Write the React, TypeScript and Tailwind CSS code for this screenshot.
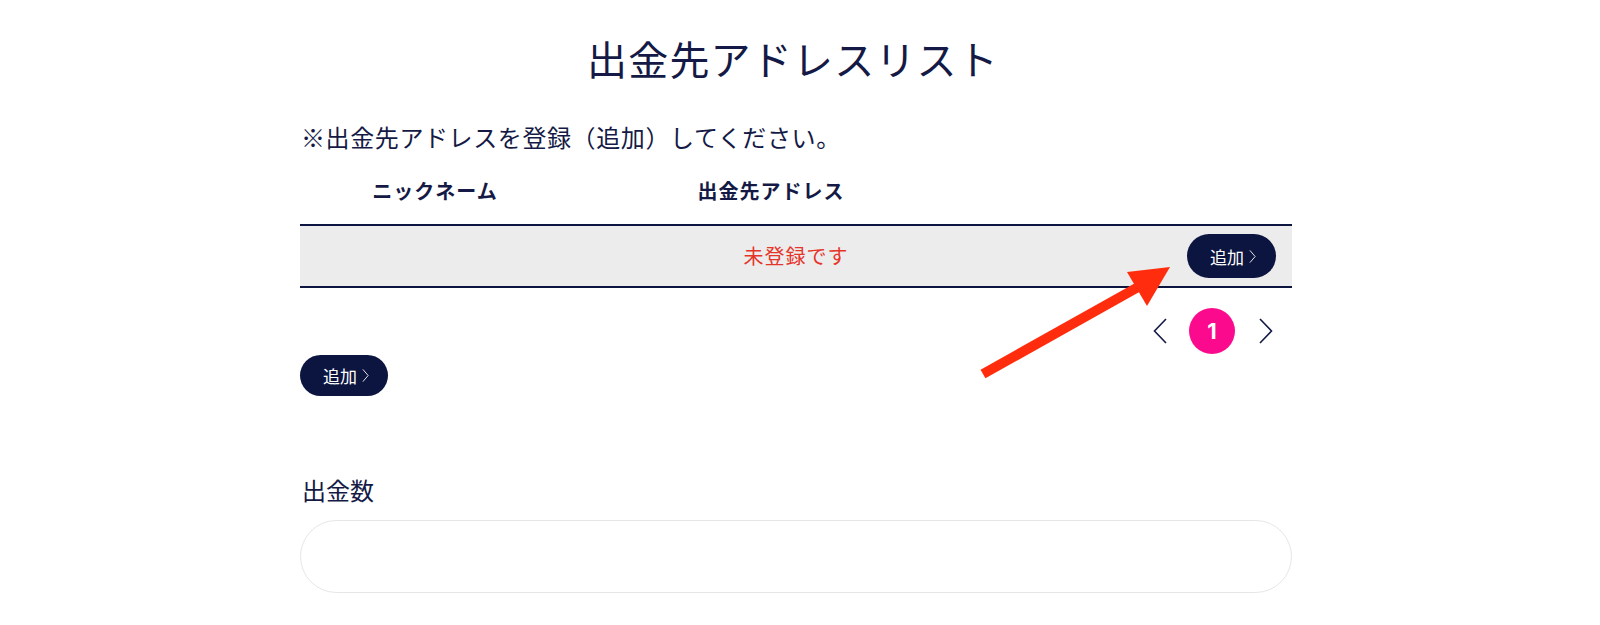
import React from 'react';

const Chevron: React.FC<{ dir: 'left' | 'right'; className?: string }> = ({ dir, className }) => (
  <svg viewBox="0 0 14 26" className={className} fill="none" stroke="currentColor" strokeWidth={1.6}>
    {dir === 'left' ? <polyline points="13,1 1.5,13 13,25" /> : <polyline points="1,1 12.5,13 1,25" />}
  </svg>
);

const AddButton: React.FC<{ className?: string }> = ({ className = '' }) => (
  <button
    className={`flex items-center rounded-full bg-[#0c1540] text-white text-[17px] leading-none pl-[23px] pr-[18px] ${className}`}
  >
    <span>追加</span>
    <svg viewBox="0 0 8 16" className="w-[7px] h-[15px] ml-[5px]" fill="none" stroke="currentColor" strokeWidth={1}>
      <polyline points="1,1 7,8 1,15" />
    </svg>
  </button>
);

export default function App() {
  return (
    <div className="relative w-full min-h-[625px] bg-white text-[#141a45] font-['Noto_Sans_CJK_JP','Noto_Sans',sans-serif]">
      <div className="w-[992px] ml-[300px] pt-[34px] pb-[32px] flex flex-col">
        <h1 className="text-center text-[40px] leading-[48px] font-normal tracking-[0.03em] mr-[6px]">出金先アドレスリスト</h1>

        <p className="mt-[39px] text-[24px] leading-[32px] tracking-[0.025em] ml-[1px]">※出金先アドレスを登録（追加）してください。</p>

        {/* table header */}
        <div className="mt-[24px] flex h-[28px] items-center text-[20px] font-bold tracking-[0.05em] leading-[28px]">
          <div className="w-[270px] text-center">ニックネーム</div>
          <div className="w-[402px] text-center">出金先アドレス</div>
          <div className="flex-1" />
        </div>

        {/* table body */}
        <div className="mt-[19px] border-y-2 border-[#0c1540] bg-[#ececec] h-[64px] flex items-center relative">
          <div className="flex-1 text-center text-[20px] tracking-[0.05em] text-[#e5342a]">未登録です</div>
          <AddButton className="absolute right-[16px] top-[8px] h-[44px] w-[89px]" />
        </div>

        {/* pagination */}
        <div className="mt-[20px] flex items-center justify-end pr-[19px] h-[46px]">
          <Chevron dir="left" className="w-[14px] h-[26px] text-[#141a45]" />
          <div className="ml-[22px] w-[46px] h-[46px] rounded-full bg-[#fb0a8e] flex items-center justify-center text-white text-[22px] font-bold font-['Inter',sans-serif]">
            1
          </div>
          <Chevron dir="right" className="ml-[24px] w-[14px] h-[26px] text-[#141a45]" />
        </div>

        <div className="mt-[1px]">
          <AddButton className="h-[41px] w-[88px]" />
        </div>

        <label className="mt-[78px] text-[24px] leading-[32px] ml-[2px]">出金数</label>
        <input
          className="mt-[14px] h-[73px] w-full rounded-full border border-[#e6e6e6] bg-white px-8 outline-none"
          type="text"
        />
      </div>

      {/* annotation arrow */}
      <svg className="absolute inset-0 w-[1600px] h-[625px] pointer-events-none" viewBox="0 0 1600 625">
        <line x1="983" y1="374" x2="1140" y2="286" stroke="#ff2d0d" strokeWidth={10} />
        <polygon points="1170,267 1127,272 1147,306" fill="#ff2d0d" />
      </svg>
    </div>
  );
}
